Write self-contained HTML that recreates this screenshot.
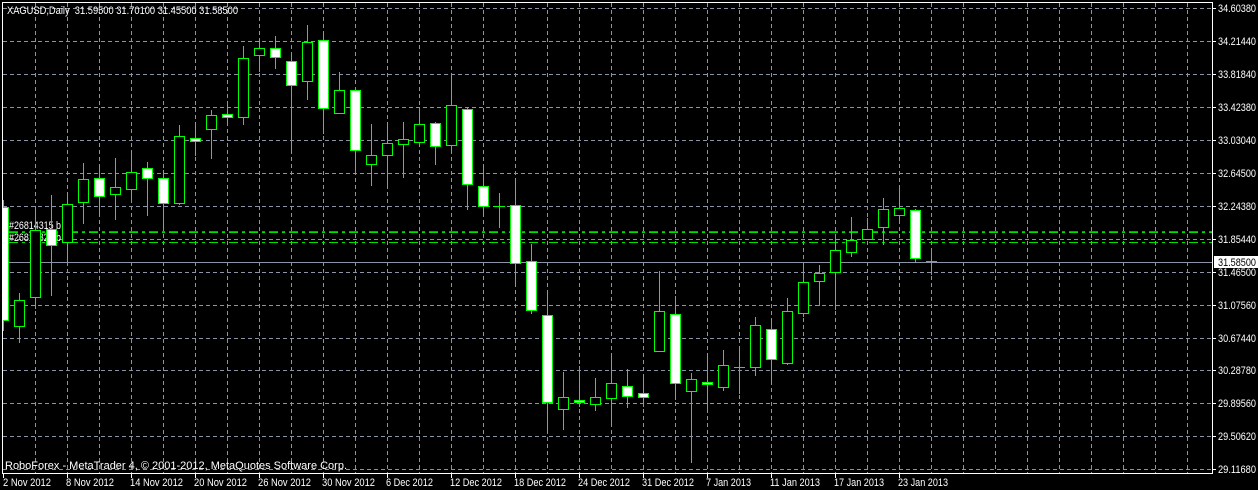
<!DOCTYPE html>
<html><head><meta charset="utf-8"><style>
html,body{margin:0;padding:0;background:#000;}
svg{display:block;}
text{font-family:"Liberation Sans",sans-serif;font-size:11px;fill:#fff;}
</style></head><body>
<svg width="1258" height="490" viewBox="0 0 1258 490" shape-rendering="crispEdges">
<rect width="1258" height="490" fill="#000"/>
<g stroke="#8a94a6" stroke-width="1" stroke-dasharray="4,3">
<line x1="3" x2="1212" y1="41.5" y2="41.5"/><line x1="3" x2="1212" y1="74.5" y2="74.5"/>
<line x1="3" x2="1212" y1="107.5" y2="107.5"/><line x1="3" x2="1212" y1="140.5" y2="140.5"/>
<line x1="3" x2="1212" y1="173.5" y2="173.5"/><line x1="3" x2="1212" y1="206.5" y2="206.5"/>
<line x1="3" x2="1212" y1="239.5" y2="239.5"/><line x1="3" x2="1212" y1="272.5" y2="272.5"/>
<line x1="3" x2="1212" y1="305.5" y2="305.5"/><line x1="3" x2="1212" y1="338.5" y2="338.5"/>
<line x1="3" x2="1212" y1="370.5" y2="370.5"/><line x1="3" x2="1212" y1="403.5" y2="403.5"/>
<line x1="3" x2="1212" y1="436.5" y2="436.5"/><line x1="3" x2="1212" y1="469.5" y2="469.5"/>
<line x1="3" x2="1212" y1="8.5" y2="8.5"/>
</g>
<g stroke="#8a94a6" stroke-width="1" stroke-dasharray="4,3">
<line y1="3" y2="473" x1="35.5" x2="35.5"/><line y1="3" y2="473" x1="67.5" x2="67.5"/><line y1="3" y2="473" x1="99.5" x2="99.5"/><line y1="3" y2="473" x1="131.5" x2="131.5"/><line y1="3" y2="473" x1="163.5" x2="163.5"/><line y1="3" y2="473" x1="195.5" x2="195.5"/><line y1="3" y2="473" x1="227.5" x2="227.5"/><line y1="3" y2="473" x1="259.5" x2="259.5"/><line y1="3" y2="473" x1="291.5" x2="291.5"/><line y1="3" y2="473" x1="323.5" x2="323.5"/><line y1="3" y2="473" x1="355.5" x2="355.5"/><line y1="3" y2="473" x1="387.5" x2="387.5"/><line y1="3" y2="473" x1="419.5" x2="419.5"/><line y1="3" y2="473" x1="451.5" x2="451.5"/><line y1="3" y2="473" x1="483.5" x2="483.5"/><line y1="3" y2="473" x1="515.5" x2="515.5"/><line y1="3" y2="473" x1="547.5" x2="547.5"/><line y1="3" y2="473" x1="579.5" x2="579.5"/><line y1="3" y2="473" x1="611.5" x2="611.5"/><line y1="3" y2="473" x1="643.5" x2="643.5"/><line y1="3" y2="473" x1="675.5" x2="675.5"/><line y1="3" y2="473" x1="707.5" x2="707.5"/><line y1="3" y2="473" x1="739.5" x2="739.5"/><line y1="3" y2="473" x1="771.5" x2="771.5"/><line y1="3" y2="473" x1="803.5" x2="803.5"/><line y1="3" y2="473" x1="835.5" x2="835.5"/><line y1="3" y2="473" x1="867.5" x2="867.5"/><line y1="3" y2="473" x1="899.5" x2="899.5"/><line y1="3" y2="473" x1="931.5" x2="931.5"/><line y1="3" y2="473" x1="963.5" x2="963.5"/><line y1="3" y2="473" x1="995.5" x2="995.5"/><line y1="3" y2="473" x1="1027.5" x2="1027.5"/><line y1="3" y2="473" x1="1059.5" x2="1059.5"/><line y1="3" y2="473" x1="1091.5" x2="1091.5"/><line y1="3" y2="473" x1="1123.5" x2="1123.5"/><line y1="3" y2="473" x1="1155.5" x2="1155.5"/><line y1="3" y2="473" x1="1187.5" x2="1187.5"/>
</g>
<g lengthAdjust="spacingAndGlyphs">
<text x="9" y="229" textLength="52" lengthAdjust="spacingAndGlyphs">#26814315 b</text>
<text x="9" y="241" textLength="52" lengthAdjust="spacingAndGlyphs">#26814320 b</text>
</g>
<g stroke-width="1" stroke-dasharray="9,4,3,4">
<line x1="9" x2="1212" y1="231.5" y2="231.5" stroke="#ff2020"/>
<line x1="9" x2="1212" y1="232.5" y2="232.5" stroke="#00e000"/>
<line x1="9" x2="1212" y1="242.5" y2="242.5" stroke="#00e000"/>
</g>
<line x1="3" x2="1212" y1="262.5" y2="262.5" stroke="#8a94a6"/>
<defs><clipPath id="cp"><rect x="3" y="3" width="1209" height="470"/></clipPath></defs>
<g clip-path="url(#cp)" stroke="#00ff00" stroke-width="1" id="cd"></g>
<g stroke="#fff" fill="none">
<line x1="2.5" x2="2.5" y1="2" y2="474"/>
<line x1="2" x2="1213" y1="2.5" y2="2.5"/>
<line x1="1212.5" x2="1212.5" y1="2" y2="474"/>
<line x1="2" x2="1213" y1="473.5" y2="473.5"/>
</g>
<g stroke="#fff">
<line x1="1212" x2="1216" y1="8.5" y2="8.5"/><line x1="1212" x2="1216" y1="41.5" y2="41.5"/><line x1="1212" x2="1216" y1="74.5" y2="74.5"/><line x1="1212" x2="1216" y1="107.5" y2="107.5"/><line x1="1212" x2="1216" y1="140.5" y2="140.5"/><line x1="1212" x2="1216" y1="173.5" y2="173.5"/><line x1="1212" x2="1216" y1="206.5" y2="206.5"/><line x1="1212" x2="1216" y1="239.5" y2="239.5"/><line x1="1212" x2="1216" y1="272.5" y2="272.5"/><line x1="1212" x2="1216" y1="305.5" y2="305.5"/><line x1="1212" x2="1216" y1="338.5" y2="338.5"/><line x1="1212" x2="1216" y1="370.5" y2="370.5"/><line x1="1212" x2="1216" y1="403.5" y2="403.5"/><line x1="1212" x2="1216" y1="436.5" y2="436.5"/><line x1="1212" x2="1216" y1="469.5" y2="469.5"/>
<line x1="3.5" x2="3.5" y1="473" y2="478"/><line x1="67.5" x2="67.5" y1="473" y2="478"/><line x1="131.5" x2="131.5" y1="473" y2="478"/><line x1="195.5" x2="195.5" y1="473" y2="478"/><line x1="259.5" x2="259.5" y1="473" y2="478"/><line x1="323.5" x2="323.5" y1="473" y2="478"/><line x1="387.5" x2="387.5" y1="473" y2="478"/><line x1="451.5" x2="451.5" y1="473" y2="478"/><line x1="515.5" x2="515.5" y1="473" y2="478"/><line x1="579.5" x2="579.5" y1="473" y2="478"/><line x1="643.5" x2="643.5" y1="473" y2="478"/><line x1="707.5" x2="707.5" y1="473" y2="478"/><line x1="771.5" x2="771.5" y1="473" y2="478"/><line x1="835.5" x2="835.5" y1="473" y2="478"/><line x1="899.5" x2="899.5" y1="473" y2="478"/>
</g>
<g>
<text x="1218" y="12" textLength="38" lengthAdjust="spacingAndGlyphs">34.60380</text><text x="1218" y="45" textLength="38" lengthAdjust="spacingAndGlyphs">34.21440</text><text x="1218" y="78" textLength="38" lengthAdjust="spacingAndGlyphs">33.81840</text><text x="1218" y="111" textLength="38" lengthAdjust="spacingAndGlyphs">33.42380</text><text x="1218" y="144" textLength="38" lengthAdjust="spacingAndGlyphs">33.03040</text><text x="1218" y="177" textLength="38" lengthAdjust="spacingAndGlyphs">32.64500</text><text x="1218" y="210" textLength="38" lengthAdjust="spacingAndGlyphs">32.24380</text><text x="1218" y="243" textLength="38" lengthAdjust="spacingAndGlyphs">31.85440</text><text x="1218" y="276" textLength="38" lengthAdjust="spacingAndGlyphs">31.46500</text><text x="1218" y="309" textLength="38" lengthAdjust="spacingAndGlyphs">31.07560</text><text x="1218" y="342" textLength="38" lengthAdjust="spacingAndGlyphs">30.67440</text><text x="1218" y="374" textLength="38" lengthAdjust="spacingAndGlyphs">30.28780</text><text x="1218" y="407" textLength="38" lengthAdjust="spacingAndGlyphs">29.89560</text><text x="1218" y="440" textLength="38" lengthAdjust="spacingAndGlyphs">29.50620</text><text x="1218" y="473" textLength="38" lengthAdjust="spacingAndGlyphs">29.11680</text>
</g>
<rect x="1214" y="256" width="44" height="12" fill="#fff"/>
<text x="1218" y="266" textLength="38" lengthAdjust="spacingAndGlyphs" style="fill:#000">31.58500</text>
<g>
<text x="3" y="486" textLength="48" lengthAdjust="spacingAndGlyphs">2 Nov 2012</text><text x="66" y="486" textLength="48" lengthAdjust="spacingAndGlyphs">8 Nov 2012</text><text x="130" y="486" textLength="53" lengthAdjust="spacingAndGlyphs">14 Nov 2012</text><text x="194" y="486" textLength="53" lengthAdjust="spacingAndGlyphs">20 Nov 2012</text><text x="258" y="486" textLength="53" lengthAdjust="spacingAndGlyphs">26 Nov 2012</text><text x="322" y="486" textLength="53" lengthAdjust="spacingAndGlyphs">30 Nov 2012</text><text x="386" y="486" textLength="47" lengthAdjust="spacingAndGlyphs">6 Dec 2012</text><text x="450" y="486" textLength="52" lengthAdjust="spacingAndGlyphs">12 Dec 2012</text><text x="514" y="486" textLength="52" lengthAdjust="spacingAndGlyphs">18 Dec 2012</text><text x="578" y="486" textLength="52" lengthAdjust="spacingAndGlyphs">24 Dec 2012</text><text x="642" y="486" textLength="52" lengthAdjust="spacingAndGlyphs">31 Dec 2012</text><text x="706" y="486" textLength="45" lengthAdjust="spacingAndGlyphs">7 Jan 2013</text><text x="770" y="486" textLength="50" lengthAdjust="spacingAndGlyphs">11 Jan 2013</text><text x="834" y="486" textLength="50" lengthAdjust="spacingAndGlyphs">17 Jan 2013</text><text x="898" y="486" textLength="50" lengthAdjust="spacingAndGlyphs">23 Jan 2013</text>
</g>
<text x="7" y="14" textLength="231" lengthAdjust="spacingAndGlyphs">XAGUSD,Daily&#160;&#160;31.59500 31.70100 31.45500 31.58500</text>
<text x="5" y="469" textLength="342" lengthAdjust="spacingAndGlyphs">RoboForex - MetaTrader 4, © 2001-2012, MetaQuotes Software Corp.</text>
</svg>
<script>
var d=[[3,200,330,207,320,'w'],[19,293,342,300,326,'b'],[35,207,308,230,297,'b'],[51,195,295,229,245,'w'],[67,192,262,204,242,'b'],[83,163,223,179,202,'b'],[99,165,214,178,196,'w'],[115,158,219,187,194,'b'],[131,150,198,172,189,'b'],[147,162,215,168,178,'w'],[163,170,227,178,203,'w'],[179,125,204,136,203,'b'],[195,122,155,138,141,'w'],[211,110,158,115,129,'b'],[227,105,122,114,117,'w'],[243,46,124,58,117,'b'],[259,40,71,48,55,'b'],[275,36,68,48,57,'w'],[291,55,153,61,85,'w'],[307,25,99,42,81,'b'],[323,31,133,40,108,'w'],[339,72,113,90,113,'b'],[355,90,172,90,150,'w'],[371,124,185,155,164,'b'],[387,122,184,143,155,'b'],[403,122,177,139,144,'b'],[419,107,142,124,142,'b'],[435,122,164,123,146,'w'],[451,74,150,105,145,'b'],[467,107,209,109,184,'w'],[483,165,214,186,206,'w'],[499,193,227,206,206,'d'],[515,182,286,205,263,'w'],[531,244,313,261,310,'w'],[547,291,431,315,402,'w'],[563,372,429,397,409,'b'],[579,366,406,400,402,'w'],[595,378,410,397,404,'b'],[611,355,424,383,398,'b'],[627,369,407,386,396,'w'],[643,374,406,393,397,'w'],[659,271,351,311,351,'b'],[675,296,399,314,383,'w'],[691,373,462,379,391,'b'],[707,356,408,382,384,'w'],[723,350,390,365,387,'b'],[739,348,393,367,367,'d'],[755,317,375,325,367,'b'],[771,319,384,329,359,'w'],[787,298,364,311,363,'b'],[803,263,316,282,313,'b'],[819,265,305,273,281,'b'],[835,235,309,250,272,'b'],[851,217,256,240,252,'b'],[867,218,239,229,239,'b'],[883,198,244,209,227,'b'],[899,188,220,208,215,'b'],[915,209,262,210,258,'w'],[931,252,274,261,261,'d']];
var s='';d.forEach(function(a){var c=a[0];s+='<line x1="'+(c+.5)+'" x2="'+(c+.5)+'" y1="'+a[1]+'" y2="'+(a[2]+1)+'"/>';
if(a[5]=='d'){s+='<line x1="'+(c-5)+'" x2="'+(c+6)+'" y1="'+(a[3]+.5)+'" y2="'+(a[3]+.5)+'"/>';}
else{s+='<rect x="'+(c-4.5)+'" y="'+(a[3]+.5)+'" width="10" height="'+Math.max(1,a[4]-a[3])+'" fill="'+(a[5]=='w'?'#fff':'#000')+'"/>';}});
document.getElementById('cd').innerHTML=s;
</script>
</body></html>
